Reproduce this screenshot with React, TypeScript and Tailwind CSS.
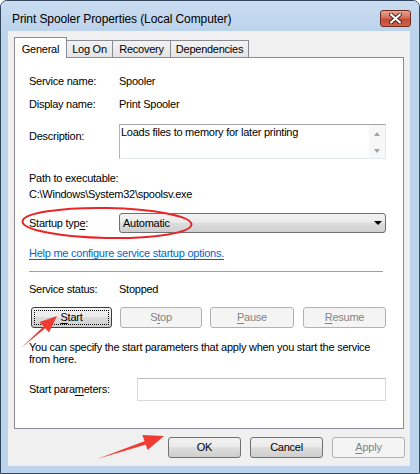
import type { ReactNode } from "react";
import clsx from "clsx";

const font = "font-['Liberation_Sans',Arial,sans-serif]";

function U({ children }: { children: ReactNode }) {
  return <span className="underline underline-offset-[2px]">{children}</span>;
}

function Btn({
  children,
  disabled,
  focus,
  className,
}: {
  children: ReactNode;
  disabled?: boolean;
  focus?: boolean;
  className?: string;
}) {
  return (
    <div
      className={clsx(
        "relative flex h-[21px] items-center justify-center rounded-[3px] border",
        disabled
          ? "border-[#adb2b5] bg-[#f4f4f4] text-[#838383]"
          : "bg-[linear-gradient(#f2f2f2_0%,#ebebeb_45%,#dddddd_50%,#cfcfcf_100%)] text-black",
        !disabled && (focus ? "border-[#3d3d3d]" : "border-[#707070]"),
        className
      )}
    >
      {focus && <div className="absolute inset-[2px] border border-dotted border-black" />}
      <span className="relative">{children}</span>
    </div>
  );
}

function Row({ label, children, className }: { label: ReactNode; children: ReactNode; className?: string }) {
  return (
    <div className={clsx("flex h-[16px] items-center", className)}>
      <div className="w-[90px]">{label}</div>
      <div>{children}</div>
    </div>
  );
}

export default function App() {
  return (
    <div
      className={clsx(
        "relative flex h-[474px] w-[420px] flex-col overflow-hidden rounded-t-[7px] border border-[#33475c] bg-[#bcd3ec] text-[11px] tracking-[-0.25px] text-black",
        font
      )}
    >
      {/* title bar */}
      <div className="flex h-[30px] items-start justify-between bg-[linear-gradient(#c9dcf1,#bcd3ec)] pl-[11px] pr-[8px]">
        <div className="pt-[11px] text-[12px] leading-[14px] tracking-[-0.1px]">
          Print Spooler Properties (Local Computer)
        </div>
        <div className="mt-[9px] flex h-[17px] w-[31px] items-center justify-center rounded-[3px] border border-[#6d2b20] bg-[linear-gradient(#e8a493_0%,#d46f5c_45%,#c44a35_55%,#d0644c_100%)]">
          <svg width="13" height="11" viewBox="0 0 13 11">
            <path
              d="M2 1.5 L6.5 5.5 L11 1.5 M2 9.5 L6.5 5.5 L11 9.5"
              stroke="#4a1c14"
              strokeWidth="4"
              fill="none"
              strokeLinecap="round"
            />
            <path
              d="M2 1.5 L6.5 5.5 L11 1.5 M2 9.5 L6.5 5.5 L11 9.5"
              stroke="#ffffff"
              strokeWidth="2.2"
              fill="none"
              strokeLinecap="round"
            />
          </svg>
        </div>
      </div>

      {/* client area */}
      <div className="mb-[7px] ml-[7px] mr-[9px] flex flex-1 flex-col bg-[#f0f0f0] pl-[6px] pt-[6px]">
        {/* tabs */}
        <div className="flex h-[20px] items-end">
          <div className="relative z-10 -mb-px flex h-[21px] w-[53px] items-start justify-center border border-b-0 border-[#898c95] bg-white pt-[3px]">
            General
          </div>
          <div className="-ml-px flex h-[17px] w-[47px] items-center justify-center border border-b-0 border-[#898c95] bg-[linear-gradient(#f3f3f3,#e4e4e4)] pt-[1px]">
            Log On
          </div>
          <div className="-ml-px flex h-[17px] w-[59px] items-center justify-center border border-b-0 border-[#898c95] bg-[linear-gradient(#f3f3f3,#e4e4e4)] pt-[1px]">
            Recovery
          </div>
          <div className="-ml-px flex h-[17px] w-[79px] items-center justify-center border border-b-0 border-[#898c95] bg-[linear-gradient(#f3f3f3,#e4e4e4)] pt-[1px]">
            Dependencies
          </div>
        </div>

        {/* panel */}
        <div className="flex h-[372px] w-[390px] flex-col border border-[#898c95] bg-white pl-[14px]">
          <Row label="Service name:" className="mt-[15px]">
            Spooler
          </Row>
          <Row label="Display name:" className="mt-[7px]">
            Print Spooler
          </Row>

          <div className="mt-[12px] flex">
            <div className="w-[90px] pt-[4px] leading-[16px]">Description:</div>
            <div className="flex h-[35px] w-[267px] border border-[#e3e9ef] border-l-[#b4b4b4] border-t-[#a5a5a5] bg-white">
              <div className="flex-1 pl-[1px] pt-[1px] leading-[13px]">Loads files to memory for later printing</div>
              <div className="flex w-[16px] flex-col items-center bg-[#f7f7f7] pt-[7px]">
                <div className="h-0 w-0 border-x-[3.5px] border-b-[4px] border-x-transparent border-b-[#a3a3a3]" />
                <div className="mt-[13px] h-0 w-0 border-x-[3.5px] border-t-[4px] border-x-transparent border-t-[#a3a3a3]" />
              </div>
            </div>
          </div>

          <div className="mt-[11px] h-[16px] leading-[16px]">Path to executable:</div>
          <div className="h-[16px] leading-[16px]">C:\Windows\System32\spoolsv.exe</div>

          <div className="mt-[11px] flex items-center">
            <div className="w-[90px]">
              Startup typ<U>e</U>:
            </div>
            <div className="flex h-[20px] w-[267px] items-center justify-between rounded-[3px] border border-[#707070] bg-[linear-gradient(#f2f2f2_0%,#ebebeb_45%,#dddddd_50%,#cfcfcf_100%)] pl-[3px] pr-[3px]">
              <span>Automatic</span>
              <div className="h-0 w-0 border-x-[4px] border-t-[4px] border-x-transparent border-t-black" />
            </div>
          </div>

          <div className="mt-[12px] h-[16px] leading-[16px] text-[#0066cc] underline underline-offset-[2px]">
            Help me configure service startup options.
          </div>

          <div className="mt-[10px] h-px w-[354px] bg-[#a0a0a0]" />

          <Row label="Service status:" className="mt-[9px]">
            Stopped
          </Row>

          <div className="mt-[10px] flex">
            <Btn focus className="ml-[2px] w-[81px]">
              <U>S</U>tart
            </Btn>
            <Btn disabled className="ml-[8px] w-[82px]">
              S<U>t</U>op
            </Btn>
            <Btn disabled className="ml-[8px] w-[84px]">
              <U>P</U>ause
            </Btn>
            <Btn disabled className="ml-[9px] w-[83px]">
              <U>R</U>esume
            </Btn>
          </div>

          <div className="mt-[13px] whitespace-nowrap leading-[12px]">
            You can specify the start parameters that apply when you start the service
            <br />
            from here.
          </div>

          <div className="mt-[13px] flex items-center">
            <div className="w-[108px]">
              Start para<U>m</U>eters:
            </div>
            <div className="h-[23px] w-[249px] border border-[#d6d9dd] border-t-[#b9bcc1] bg-white" />
          </div>
        </div>

        {/* dialog buttons */}
        <div className="mt-[8px] flex justify-end gap-[9px] pr-[5px]">
          <Btn className="w-[73px]">OK</Btn>
          <Btn className="w-[73px]">Cancel</Btn>
          <Btn disabled className="w-[73px]">
            <U>A</U>pply
          </Btn>
        </div>
      </div>

      {/* red annotations */}
      <svg className="pointer-events-none absolute left-[-1px] top-[-1px]" width="420" height="474" viewBox="0 0 420 474">
        <ellipse cx="107" cy="223" rx="84.5" ry="15" fill="none" stroke="#e8262a" strokeWidth="2" transform="rotate(1 107 223)" />
        <polygon points="21,348 43.5,326.5 45,328.5" fill="#ef3b32" />
        <polygon points="57,316 49,332.5 39.6,322" fill="#ef3b32" />
        <polygon points="97,459 145,441 146,444.5" fill="#ef3b32" />
        <polygon points="164,436 147.6,450 142.4,435" fill="#ef3b32" />
      </svg>
    </div>
  );
}
